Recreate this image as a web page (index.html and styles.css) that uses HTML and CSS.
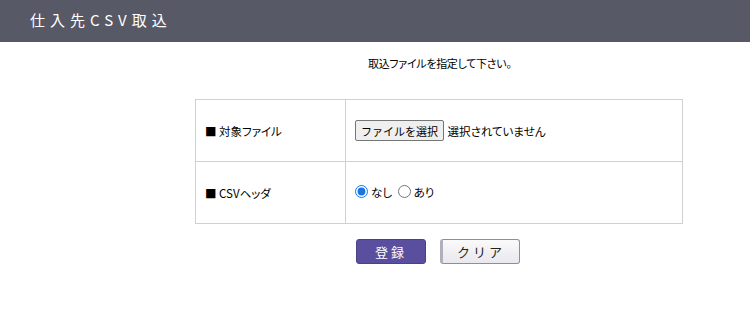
FILE: index.html
```html
<!DOCTYPE html>
<html lang="ja">
<head>
    <meta charset="UTF-8">
    <title>仕入先CSV取込</title>
    <link rel="stylesheet" href="styles.css">
</head>
<body>
    <div class="header">
        <h1>仕入先CSV取込</h1>
    </div>
    <p class="message">取込ファイルを指定して下さい。</p>
    <table class="form-table">
        <tr>
            <th>■ 対象ファイル</th>
            <td><button class="file-button">ファイルを選択</button> 選択されていません</td>
        </tr>
        <tr>
            <th>■ CSVヘッダ</th>
            <td class="radio-cell">
                <label><input type="radio" name="header" checked>なし</label>
                <label><input type="radio" name="header">あり</label>
            </td>
        </tr>
    </table>
    <div class="buttons">
        <button class="btn-submit">登録</button>
        <button class="btn-clear">クリア</button>
    </div>
</body>
</html>
```

FILE: styles.css
```css
body {
    margin: 0;
    font-family: "Noto Sans CJK JP", "Noto Sans", sans-serif;
    font-size: 12px;
    font-feature-settings: "palt";
    color: #000;
    background: #fff;
}

.header {
    height: 42px;
    background: #585966;
    display: flex;
    align-items: center;
    padding-left: 30px;
    box-sizing: border-box;
}
.header h1 {
    margin: 0 0 4px;
    color: #fff;
    font-size: 15px;
    font-weight: normal;
    letter-spacing: 5px;
    font-feature-settings: normal;
}

.message {
    margin: 11px 0 0;
    padding-left: 368px;
    height: 20px;
    line-height: 20px;
    font-size: 11px;
    letter-spacing: -0.3px;
}

.form-table {
    margin: 26px 0 0 195px;
    width: 488px;
    border-collapse: collapse;
    border: 1px solid #d0d0d0;
}
.form-table th,
.form-table td {
    border: 1px solid #d0d0d0;
    height: 61px;
    padding: 0;
    font-weight: normal;
    text-align: left;
    font-size: 11.5px;
}
.form-table th {
    width: 140px;
    padding-left: 9px;
}
.form-table td {
    padding-left: 9px;
}
.radio-cell {
    padding-top: 4px;
}
.radio-cell label {
    display: inline-flex;
    align-items: center;
    margin-right: 3px;
}
.radio-cell input {
    margin: 0 3px 0 0;
    width: 13px;
    height: 13px;
    accent-color: #1a73e8;
}

.file-button {
    font-family: inherit;
    font-feature-settings: normal;
    font-size: 11px;
    padding: 1px 5px;
    height: 21px;
    border: 1px solid #767676;
    border-radius: 2px;
    background: #efefef;
    margin-right: 1px;
}

.buttons {
    margin: 15px 0 0 356px;
    display: flex;
    gap: 14px;
}
.buttons button {
    height: 25px;
    font-family: inherit;
    font-size: 13px;
    border-radius: 3px;
    letter-spacing: 3px;
}
.btn-submit {
    width: 70px;
    background: #5a4f9f;
    color: #fff;
    border: 1px solid #4a4188;
}
.btn-clear {
    width: 80px;
    color: #222;
    border: 1px solid #8f8ca0;
    border-left: 3px solid #b0b0bc;
    background: linear-gradient(#fafafa, #e8e8ee);
}
```
